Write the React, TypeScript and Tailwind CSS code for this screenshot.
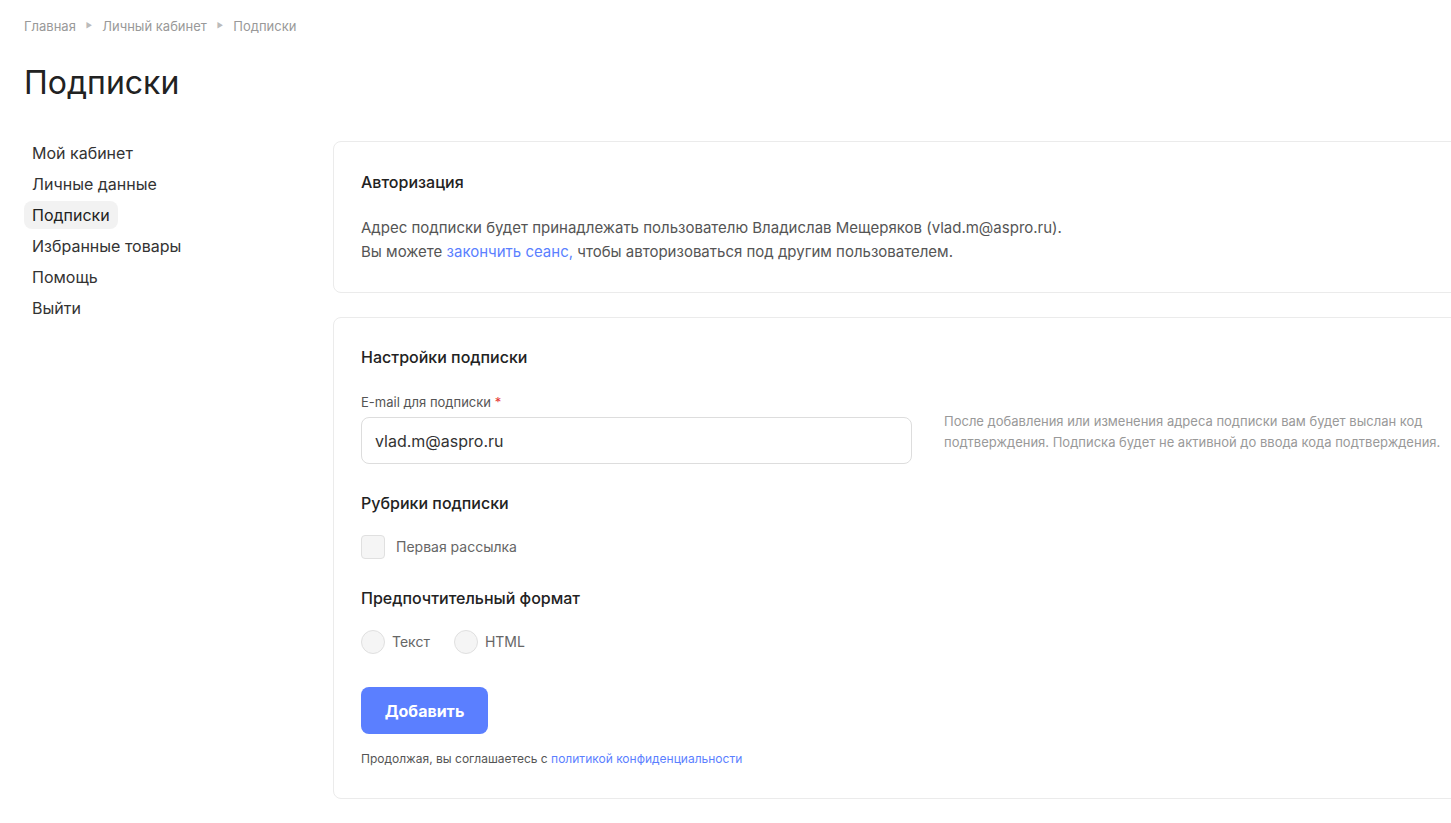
import { useState } from "react";

const menu = ["Мой кабинет", "Личные данные", "Подписки", "Избранные товары", "Помощь", "Выйти"];

const Crumbs = () => (
  <div className="flex items-center gap-[10px] text-[13px] leading-5 text-[#999]">
    <span>Главная</span>
    <span className="text-[7px] text-[#bbb]">▶</span>
    <span>Личный кабинет</span>
    <span className="text-[7px] text-[#bbb]">▶</span>
    <span>Подписки</span>
  </div>
);

const Radio = ({ label, checked, onClick }: { label: string; checked: boolean; onClick: () => void }) => (
  <label className="flex items-center gap-[7px] cursor-pointer" onClick={onClick}>
    <span className="w-6 h-6 rounded-full border border-[#e0e0e0] bg-[#f5f5f5] flex items-center justify-center">
      {checked && <span className="w-2.5 h-2.5 rounded-full bg-[#5b7fff]" />}
    </span>
    <span className="text-sm text-[#666]">{label}</span>
  </label>
);

const App = () => {
  const [email, setEmail] = useState("vlad.m@aspro.ru");
  const [rubric, setRubric] = useState(false);
  const [format, setFormat] = useState<"text" | "html" | null>(null);

  return (
    <div className="min-h-screen bg-white overflow-x-hidden font-['Inter',sans-serif] text-[#333]">
      <div className="pl-6 pt-[16px]">
        <Crumbs />
        <h1 className="mt-[27px] text-[32px] leading-10 text-[#222]">Подписки</h1>

        <div className="flex mt-[36px]">
          {/* sidebar */}
          <nav className="w-[309px] shrink-0 flex flex-col gap-[3px]">
            {menu.map((item) => (
              <div key={item} className="flex">
                <span
                  className={
                    "px-2 h-7 flex items-center text-base rounded-lg " +
                    (item === "Подписки" ? "bg-[#f2f2f2] text-[#222]" : "text-[#333]")
                  }
                >
                  {item}
                </span>
              </div>
            ))}
          </nav>

          <div className="flex flex-col gap-6 w-[1160px] shrink-0 mt-[2px]">
            <section className="border border-[#ebebeb] rounded-lg px-[27px] pt-[28px] pb-[28px]">
              <h2 className="text-base font-medium leading-6 text-[#222]">Авторизация</h2>
              <div className="mt-[22px] text-[15px] leading-6 text-[#555]">
                <p>Адрес подписки будет принадлежать пользователю Владислав Мещеряков (vlad.m@aspro.ru).</p>
                <p>
                  Вы можете <a className="text-[#5b7fff]">закончить сеанс,</a> чтобы авторизоваться под другим
                  пользователем.
                </p>
              </div>
            </section>

            <section className="border border-[#ebebeb] rounded-lg px-[27px] pt-[27px] pb-[29px]">
              <h2 className="text-base font-medium leading-6 text-[#222]">Настройки подписки</h2>

              <div className="mt-[24px] flex items-start gap-8">
                <div className="w-[551px]">
                  <div className="text-[13px] leading-[18px] text-[#555]">
                    E-mail для подписки <span className="text-[#e53935]">*</span>
                  </div>
                  <input
                    value={email}
                    onChange={(e) => setEmail(e.target.value)}
                    className="mt-[6px] w-full h-[47px] px-[13px] border border-[#ddd] rounded-lg text-base text-[#333] outline-none"
                  />
                </div>
                <p className="mt-[18px] w-[500px] text-[13px] leading-[21px] text-[#999]">
                  После добавления или изменения адреса подписки вам будет выслан код подтверждения. Подписка будет не
                  активной до ввода кода подтверждения.
                </p>
              </div>

              <h3 className="mt-[27px] text-base font-medium leading-6 text-[#222]">Рубрики подписки</h3>
              <label className="mt-[20px] flex items-center gap-[11px] cursor-pointer" onClick={() => setRubric(!rubric)}>
                <span className="w-6 h-6 rounded border border-[#e0e0e0] bg-[#f5f5f5] flex items-center justify-center">
                  {rubric && <span className="w-3 h-3 rounded-sm bg-[#5b7fff]" />}
                </span>
                <span className="text-sm text-[#666]">Первая рассылка</span>
              </label>

              <h3 className="mt-[27px] text-base font-medium leading-6 text-[#222]">Предпочтительный формат</h3>
              <div className="mt-[20px] flex items-center gap-6">
                <Radio label="Текст" checked={format === "text"} onClick={() => setFormat("text")} />
                <Radio label="HTML" checked={format === "html"} onClick={() => setFormat("html")} />
              </div>

              <button className="mt-[33px] w-[127px] h-[47px] rounded-lg bg-[#5b7fff] text-white text-base font-bold">
                Добавить
              </button>

              <p className="mt-[15px] text-xs leading-5 text-[#555]">
                Продолжая, вы соглашаетесь с <a className="text-[#5b7fff]">политикой конфиденциальности</a>
              </p>
            </section>
          </div>
        </div>
      </div>
    </div>
  );
};

export default App;
